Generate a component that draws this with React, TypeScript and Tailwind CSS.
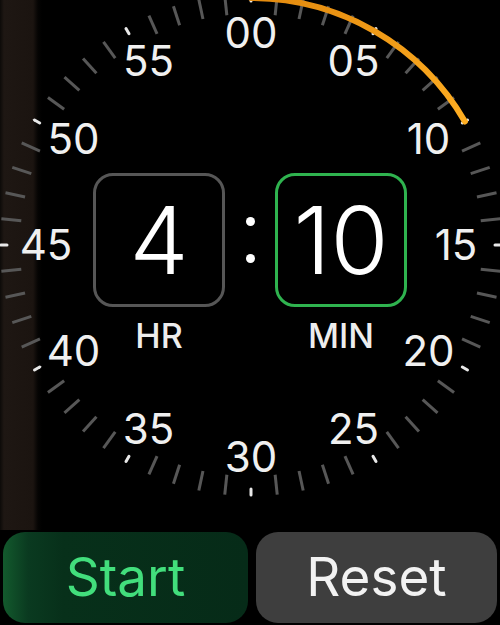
import React from 'react';

// dial geometry, measured from the watch face
const CX = 251;
const CY = 245;
const LABELS = ['00', '05', '10', '15', '20', '25', '30', '35', '40', '45', '50', '55'];

function polar(r: number, deg: number) {
  const a = (deg * Math.PI) / 180;
  return { x: CX + r * Math.sin(a), y: CY - r * Math.cos(a) };
}

function DialMarks() {
  const ticks = [];
  for (let i = 0; i < 60; i++) {
    const deg = i * 6;
    if (i % 5 === 0) {
      const p1 = polar(244, deg);
      const p2 = polar(250, deg);
      ticks.push(
        <line key={i} x1={p1.x} y1={p1.y} x2={p2.x} y2={p2.y} stroke="#e8e8e8" strokeWidth={3} strokeLinecap="round" />
      );
    } else {
      const p1 = polar(231, deg);
      const p2 = polar(251, deg);
      ticks.push(
        <line key={i} x1={p1.x} y1={p1.y} x2={p2.x} y2={p2.y} stroke="#575757" strokeWidth={3} />
      );
    }
  }
  const start = polar(247, 0);
  const end = polar(247, 60);

  return (
    <svg className="absolute inset-0" width={500} height={530} viewBox="0 0 500 530">
      <defs>
        <linearGradient id="arc" x1="0" y1="0" x2="1" y2="1">
          <stop offset="0%" stopColor="#e38a0e" />
          <stop offset="100%" stopColor="#ffae22" />
        </linearGradient>
      </defs>
      {ticks}
      <path
        d={`M ${start.x} ${start.y} A 247 247 0 0 1 ${end.x} ${end.y}`}
        fill="none"
        stroke="url(#arc)"
        strokeWidth={6}
        strokeLinecap="round"
      />
    </svg>
  );
}

function DialLabels() {
  return (
    <>
      {LABELS.map((label, i) => {
        const a = (i * 30 * Math.PI) / 180;
        const x = CX + 205 * Math.sin(a);
        const y = CY - 212 * Math.cos(a);
        return (
          <div
            key={label}
            className="absolute -translate-x-1/2 -translate-y-1/2 text-[42px] leading-none text-[#f0f0f0]"
            style={{ left: x, top: y }}
          >
            {label}
          </div>
        );
      })}
    </>
  );
}

function TimeBox({ value, unit, active }: { value: string; unit: string; active?: boolean }) {
  return (
    <div className="flex w-[132px] flex-col items-center">
      <div
        className={`flex h-[134px] w-[132px] items-center justify-center rounded-[20px] border-[3px] ${
          active ? 'border-[#2fb34f]' : 'border-[#565656]'
        }`}
      >
        <span className="text-[94px] font-light leading-none text-white">{value}</span>
      </div>
      <span className="mt-[12px] text-[34px] font-medium leading-none text-[#ededed]">{unit}</span>
    </div>
  );
}

export default function App() {
  return (
    <div className="flex h-[625px] w-[500px] flex-col overflow-hidden bg-black font-['Inter','Noto_Sans',sans-serif]">
      <div className="relative h-[530px] w-full bg-[linear-gradient(to_right,#0c0a08_0px,#1e1713_4px,#1b1410_33px,#050403_38px,#000_42px)]">
        <DialMarks />
        <DialLabels />
        <div className="relative flex justify-center pt-[173px]">
          <TimeBox value="4" unit="HR" />
          <div className="flex h-[134px] w-[50px] flex-col items-center justify-center gap-[28px]">
            <span className="h-[9px] w-[9px] rounded-full bg-white" />
            <span className="h-[9px] w-[9px] rounded-full bg-white" />
          </div>
          <TimeBox value="10" unit="MIN" active />
        </div>
      </div>

      <div className="mt-[2px] flex gap-[8px] px-[3px]">
        <button className="flex h-[91px] w-[245px] items-center justify-center rounded-[22px] bg-[linear-gradient(to_right,#135a2d_0px,#0a3a20_25px,#07301a_60px,#062b18_100%)] text-[53px] leading-none text-[#42de7c]">
          Start
        </button>
        <button className="flex h-[91px] flex-1 items-center justify-center rounded-[22px] bg-[#3e3e3e] text-[53px] leading-none text-[#f2f2f2]">
          Reset
        </button>
      </div>
    </div>
  );
}
